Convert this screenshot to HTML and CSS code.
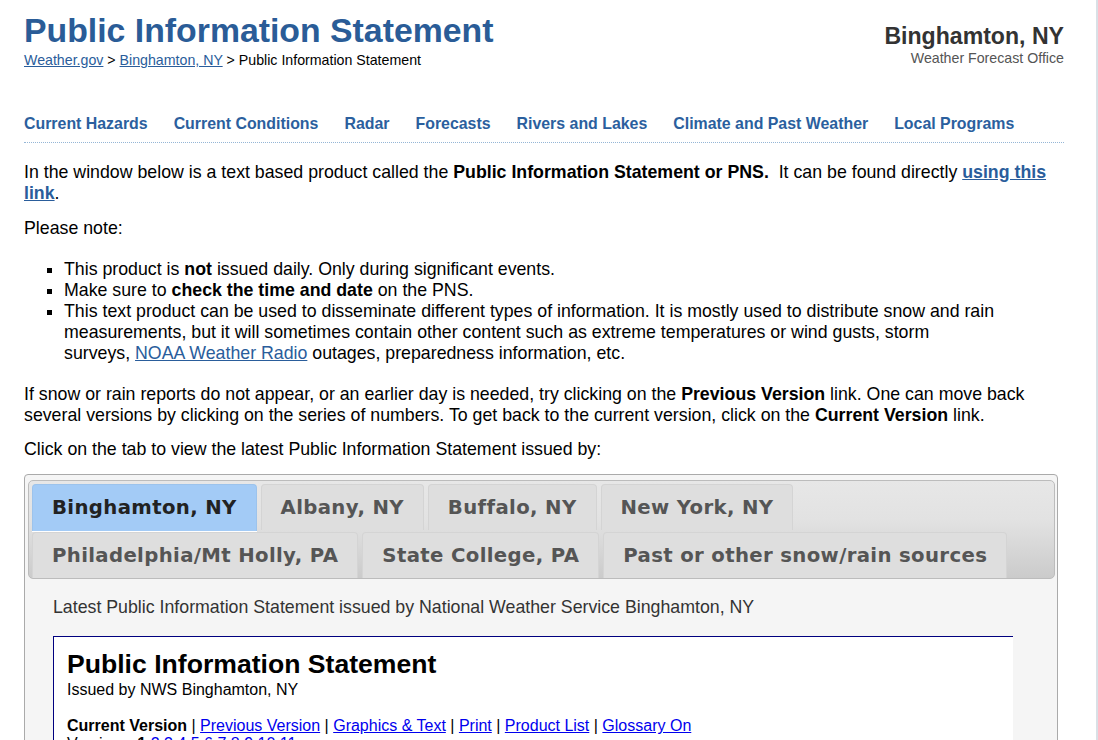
FILE: index.html
```html
<!DOCTYPE html>
<html lang="en">
<head>
<meta charset="utf-8">
<title>Public Information Statement - Binghamton, NY</title>
<link rel="stylesheet" href="styles.css">
</head>
<body>
<div class="page">
  <header class="site-header">
    <div class="title-block">
      <h1 class="page-title">Public Information Statement</h1>
      <div class="breadcrumb"><a href="#">Weather.gov</a> &gt; <a href="#">Binghamton, NY</a> &gt; Public Information Statement</div>
    </div>
    <div class="office">
      <div class="office-name">Binghamton, NY</div>
      <div class="office-sub">Weather Forecast Office</div>
    </div>
  </header>

  <nav class="main-nav">
    <a href="#">Current Hazards</a>
    <a href="#">Current Conditions</a>
    <a href="#">Radar</a>
    <a href="#">Forecasts</a>
    <a href="#">Rivers and Lakes</a>
    <a href="#">Climate and Past Weather</a>
    <a href="#">Local Programs</a>
  </nav>

  <main class="content">
    <p class="first">In the window below is a text based product called the <b>Public Information Statement or PNS.</b>&nbsp; It can be found directly <a class="strong-link" href="#">using this link</a>.</p>
    <p>Please note:</p>
    <ul class="notes">
      <li>This product is <b>not</b> issued daily. Only during significant events.</li>
      <li>Make sure to <b>check the time and date</b> on the PNS.</li>
      <li>This text product can be used to disseminate different types of information. It is mostly used to distribute snow and rain measurements, but it will sometimes contain other content such as extreme temperatures or wind gusts, storm<br>surveys, <a href="#">NOAA Weather Radio</a> outages, preparedness information, etc.</li>
    </ul>
    <p>If snow or rain reports do not appear, or an earlier day is needed, try clicking on the <b>Previous Version</b> link. One can move back several versions by clicking on the series of numbers. To get back to the current version, click on the <b>Current Version</b> link.</p>
    <p>Click on the tab to view the latest Public Information Statement issued by:</p>

    <div class="tabs">
      <ul class="tab-bar">
        <li class="tab active">Binghamton, NY</li>
        <li class="tab">Albany, NY</li>
        <li class="tab">Buffalo, NY</li>
        <li class="tab">New York, NY</li>
        <li class="tab">Philadelphia/Mt Holly, PA</li>
        <li class="tab">State College, PA</li>
        <li class="tab">Past or other snow/rain sources</li>
      </ul>
      <div class="tab-panel">
        <p class="panel-intro">Latest Public Information Statement issued by National Weather Service Binghamton, NY</p>
        <div class="product">
          <h2 class="product-title">Public Information Statement</h2>
          <div class="product-issuer">Issued by NWS Binghamton, NY</div>
          <div class="product-links"><b>Current Version</b> | <a href="#">Previous Version</a> | <a href="#">Graphics &amp; Text</a> | <a href="#">Print</a> | <a href="#">Product List</a> | <a href="#">Glossary On</a></div>
          <div class="product-versions">Versions: <b>1</b> <a href="#">2</a> <a href="#">3</a> <a href="#">4</a> <a href="#">5</a> <a href="#">6</a> <a href="#">7</a> <a href="#">8</a> <a href="#">9</a> <a href="#">10</a> <a href="#">11</a></div>
          <pre class="product-text">000
NOUS41 KBGM 
PNSBGM

Public Information Statement
National Weather Service Binghamton NY</pre>
        </div>
      </div>
    </div>
  </main>
</div>
</body>
</html>
```

FILE: styles.css
```css
html {
  overflow: hidden;
}

body {
  margin: 0;
  background: #ffffff;
  font-family: "Liberation Sans", Arial, Helvetica, sans-serif;
  color: #000;
}

.page {
  width: 1098px;
  box-sizing: border-box;
  padding: 0 32px 0 24px;
  border-right: 2px solid #d9e0e6;
  min-height: 740px;
}

/* Header */
.site-header {
  display: flex;
  justify-content: space-between;
  align-items: flex-start;
  padding-top: 11px;
}

.page-title {
  margin: 0;
  font-size: 33.8px;
  line-height: 38px;
  font-weight: bold;
  color: #2a5c97;
}

.breadcrumb {
  margin-top: 3px;
  font-size: 14.2px;
  line-height: 16px;
  color: #000;
}

.breadcrumb a {
  color: #2a5d9b;
  text-decoration: underline;
}

.office {
  text-align: right;
  padding-top: 12px;
}

.office-name {
  font-size: 23.1px;
  line-height: 26px;
  font-weight: bold;
  color: #333;
}

.office-sub {
  margin-top: 1px;
  font-size: 14.2px;
  line-height: 16px;
  color: #555;
}

/* Navigation */
.main-nav {
  display: flex;
  column-gap: 26px;
  margin-top: 47px;
  padding-bottom: 9px;
  border-bottom: 1px dotted #95b6d6;
}

.main-nav a {
  font-size: 15.9px;
  line-height: 18px;
  font-weight: bold;
  color: #2b5f9e;
  text-decoration: none;
}

/* Content */
.content {
  font-size: 17.76px;
  line-height: 21px;
}

.content p {
  margin: 13.5px 0;
}

.content p.first {
  margin-top: 19px;
}

.content a {
  color: #2a5d9b;
}

.strong-link {
  font-weight: bold;
}

.notes {
  margin: 20px 0;
  padding-left: 40px;
  list-style: square;
}

/* Tabs widget */
.tabs {
  width: 1034px;
  box-sizing: border-box;
  border: 1px solid #aaaaaa;
  border-radius: 4px;
  background: #f5f5f5;
  padding: 5px 2px 0 3px;
}

.tab-bar {
  margin: 0;
  padding: 3px 3px 0;
  list-style: none;
  display: flex;
  flex-wrap: wrap;
  column-gap: 4px;
  row-gap: 2px;
  border: 1px solid #bcbcbc;
  border-radius: 5px;
  background: linear-gradient(to bottom, #e7e7e7 0%, #e2e2e2 40%, #cbcbcb 100%);
}

.tab {
  height: 46px;
  box-sizing: border-box;
  display: flex;
  align-items: center;
  padding: 0 19px;
  border: 1px solid #d4d4d4;
  border-bottom: 0;
  border-radius: 4px 4px 0 0;
  background: #dedede;
  font-family: "DejaVu Sans", Verdana, sans-serif;
  font-weight: bold;
  font-size: 19.7px;
  letter-spacing: 0.35px;
  color: #555555;
  white-space: nowrap;
}

.tab.active {
  height: 47px;
  margin-bottom: -1px;
  background: #a3cbf6;
  border-color: #9cc3ec;
  color: #222222;
  box-shadow: 0 1px 0 #ffffff;
}

.tab-panel {
  padding: 18px 0 0 25px;
}

.content .tab-panel .panel-intro {
  margin: 0 0 18.5px;
  color: #333;
}

.product {
  width: 960px;
  box-sizing: border-box;
  background: #ffffff;
  border-top: 1px solid #00007f;
  border-left: 1px solid #00007f;
  padding: 11.5px 13px 20px;
  color: #000;
}

.product-title {
  margin: 0 0 2px;
  font-size: 26.6px;
  line-height: 30px;
  font-weight: bold;
}

.product-issuer {
  font-size: 16px;
  line-height: 18px;
}

.product-links {
  margin-top: 18.7px;
  font-size: 16px;
  line-height: 18px;
}

.product-versions {
  font-size: 16px;
  line-height: 18px;
}

.product a {
  color: #0000ee;
}

.product-text {
  font-family: "Liberation Mono", "Courier New", monospace;
  font-size: 14px;
  line-height: 17px;
  margin: 16px 0 0;
}
```
